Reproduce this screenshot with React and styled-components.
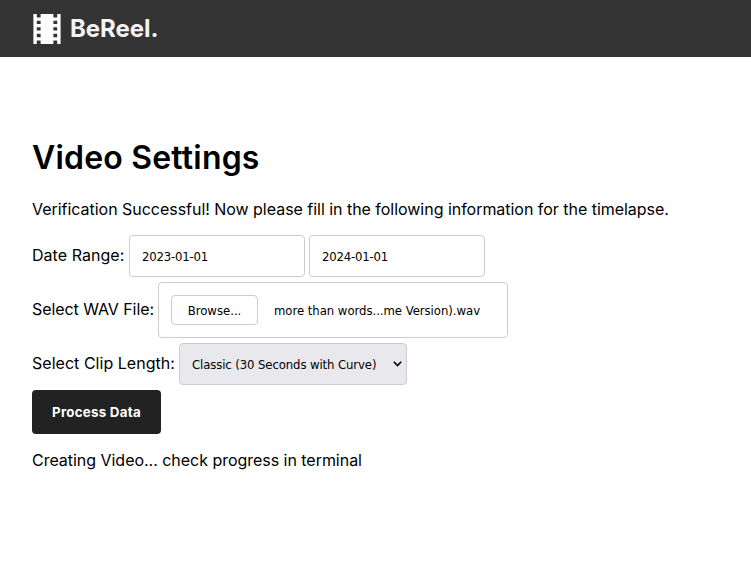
import React from 'react';
import styled, { createGlobalStyle } from 'styled-components';

const Global = createGlobalStyle`
  *, *::before, *::after { box-sizing: border-box; }
  body { margin: 0; background: #fff; color: #000; font-family: Inter, sans-serif; font-size: 16px; }
`;
const controlFont = "13px 'DejaVu Sans Condensed', 'DejaVu Sans', sans-serif";
const Header = styled.header`
  display: flex; align-items: center; gap: 9px; height: 57px; padding: 0 32px 0 33px; background: #333; color: #f3f3f3;
`;
const Brand = styled.span`font-size: 24px; font-weight: 700; line-height: 29px; letter-spacing: -0.05px;`;
const Main = styled.main`
  display: flex; flex-direction: column; align-items: flex-start; padding: 81px 32px 0;
`;
const Title = styled.h1`margin: 0; font-size: 32px; font-weight: 600; line-height: 39px; letter-spacing: 0.19px; white-space: nowrap;`;
const Text = styled.p`margin: ${(p) => p.$top}px 0 0; line-height: 20px; letter-spacing: -0.03px; white-space: nowrap;`;
const Row = styled.div`
  display: flex; align-items: center; gap: 4px; height: ${(p) => p.$h}px; margin-top: ${(p) => p.$top}px; white-space: nowrap;
`;
const Label = styled.label`
  width: ${(p) => p.$w}px; line-height: 20px; margin-top: -2px; letter-spacing: ${(p) => p.$track || 0}px;
`;
const DateInput = styled.input`
  width: 176px; height: 42px; padding: 0 12px; border: 1px solid #ccc; border-radius: 4px; background: #fff;
  color: #000; font: ${controlFont}; letter-spacing: -0.2px;
`;
const FileBox = styled.div`
  display: flex; align-items: center; gap: 16px; width: 350px; height: 56px; padding: 0 12px;
  border: 1px solid #ccc; border-radius: 4px; font: ${controlFont}; letter-spacing: -0.04px;
`;
const Browse = styled.button`
  width: 87px; height: 30px; padding: 0; border: 1px solid #ccc; border-radius: 4px; background: #fff; color: #000; font: inherit;
`;
const Select = styled.button`
  display: flex; align-items: center; justify-content: space-between; width: 228px; height: 42px; padding: 0 4px 0 12px;
  border: 1px solid #ccc; border-radius: 4px; background: #e9e9ed; color: #000; font: ${controlFont}; letter-spacing: -0.11px;
`;
const Submit = styled.button`
  width: 129px; height: 44px; margin-top: 5px; padding: 0; border: 0; border-radius: 4px; background: #222; color: #fff;
  font: 700 13.333px Inter, sans-serif; letter-spacing: 0.25px;
`;

const holes = [0, 6.7, 13.2, 19.8, 26.6];

const FilmIcon = () => (
  <svg width="28" height="30" viewBox="0 0 28 30">
    <path fill="#fff" d="M0.4 0h27.2v30h-27.2z" />
    {holes.map((y) => (
      <path key={y} fill="#333" d={`M3.8 ${y}h3.8v3.4h-3.8zM20.4 ${y}h3.8v3.4h-3.8z`} />
    ))}
  </svg>
);

const Chevron = () => (
  <svg width="9" height="6" viewBox="0 0 9 6" fill="none" stroke="#000" strokeWidth="1.6">
    <path d="M.8.8l3.7 3.7L8.2.8" />
  </svg>
);

export default function App() {
  return (
    <>
      <Global />
      <Header>
        <FilmIcon />
        <Brand>BeReel.</Brand>
      </Header>
      <Main>
        <Title>Video Settings</Title>
        <Text $top={22}>Verification Successful! Now please fill in the following information for the timelapse.</Text>
        <Row $top={16} $h={42}>
          <Label $w={93} $track={0.04}>Date Range:</Label>
          <DateInput defaultValue="2023-01-01" />
          <DateInput defaultValue="2024-01-01" />
        </Row>
        <Row $top={5} $h={56}>
          <Label $w={122} $track={-0.07}>Select WAV File:</Label>
          <FileBox>
            <Browse>Browse...</Browse>
            <span>more than words...me Version).wav</span>
          </FileBox>
        </Row>
        <Row $top={5} $h={42}>
          <Label $w={143} $track={0.03}>Select Clip Length:</Label>
          <Select>Classic (30 Seconds with Curve)<Chevron /></Select>
        </Row>
        <Submit>Process Data</Submit>
        <Text $top={16}>Creating Video... check progress in terminal</Text>
      </Main>
    </>
  );
}
